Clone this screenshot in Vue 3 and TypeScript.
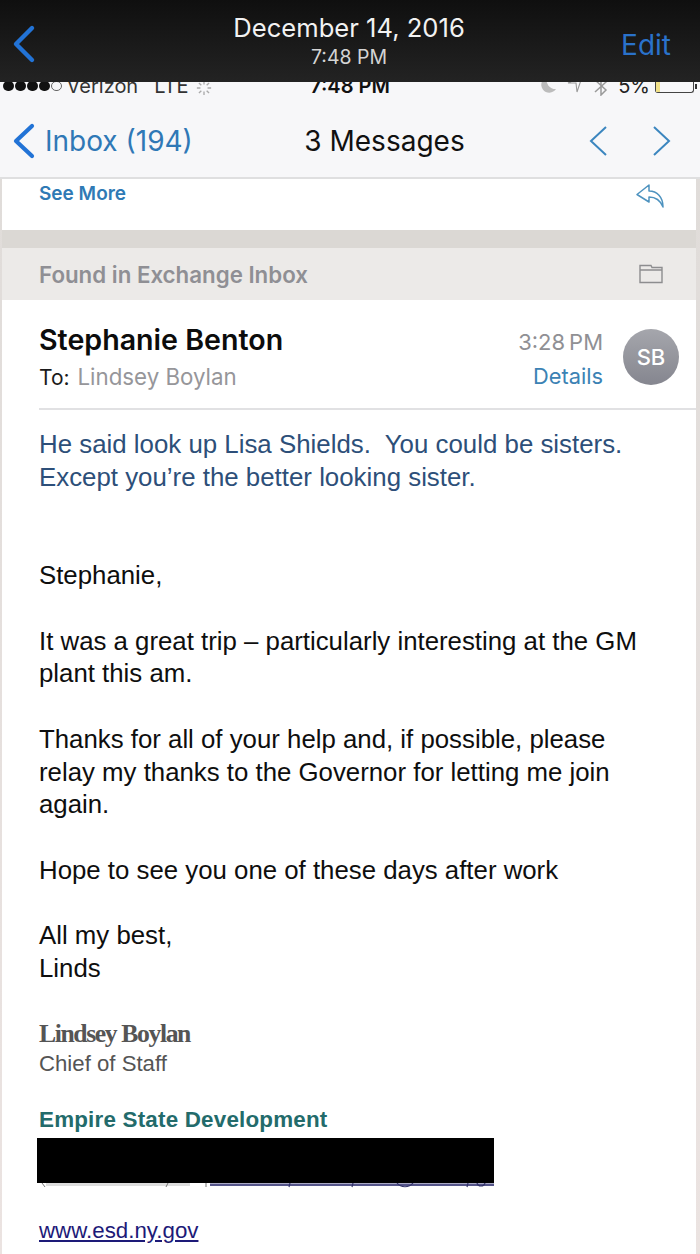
<script setup lang="ts">
const paragraphs: string[][] = [
  ['Stephanie,'],
  ['It was a great trip – particularly interesting at the GM', 'plant this am.'],
  ['Thanks for all of your help and, if possible, please', 'relay my thanks to the Governor for letting me join', 'again.'],
  ['Hope to see you one of these days after work'],
  ['All my best,', 'Linds'],
]
</script>

<template>
  <div class="screen">
    <header class="viewer-bar">
      <svg class="viewer-back" width="26" height="40" viewBox="0 0 26 40" fill="none">
        <path d="M21 4 L5 20 L21 36" stroke="#2273d6" stroke-width="4.4" stroke-linecap="round" stroke-linejoin="round" />
      </svg>
      <div class="viewer-title">
        <div class="viewer-date">December 14, 2016</div>
        <div class="viewer-time">7:48 PM</div>
      </div>
      <span class="viewer-edit">Edit</span>
    </header>

    <div class="status">
      <div class="status-left">
        <span class="dots">
          <i></i><i></i><i></i><i></i><i class="empty"></i>
        </span>
        <span class="carrier">Verizon</span>
        <span class="lte">LTE</span>
        <svg class="spinner" width="16" height="16" viewBox="0 0 18 18" stroke="#aaa" stroke-width="1.500">
          <path d="M9 1V5M9 13V17M1 9H5M13 9H17M3.300 3.300L6 6M12 12L14.700 14.700M14.700 3.300L12 6M6 12L3.300 14.700" />
        </svg>
      </div>
      <div class="status-time">7:48 PM</div>
      <div class="status-right">
        <svg class="moon" width="16" height="16" viewBox="0 0 16 16"><path d="M7 0a8 8 0 1 0 9 12A9 9 0 0 1 7 0z" fill="#bcbcbc" /></svg>
        <svg class="arrow" width="16" height="16" viewBox="0 0 16 16" fill="none" stroke="#9a9a9a" stroke-width="1.100"><path d="M1 6 15 0 10 15 9 6z" /></svg>
        <svg class="bt" width="14" height="20" viewBox="0 0 14 20" fill="none" stroke="#9a9a9a" stroke-width="1.500"><path d="M1 4 12 14 7 19V1L12 6 1 16" /></svg>
        <span class="pct">5%</span>
        <span class="battery"><span class="battery-fill"></span></span>
        <span class="battery-tip"></span>
      </div>
    </div>

    <nav class="nav">
      <div class="nav-back">
        <svg width="24" height="38" viewBox="0 0 24 38" fill="none">
          <path d="M21 4 L5 19 L21 34" stroke="#2273d6" stroke-width="4.200" stroke-linecap="round" stroke-linejoin="round" />
        </svg>
        <span>Inbox (194)</span>
      </div>
      <div class="nav-title">3 Messages</div>
      <div class="nav-arrows">
        <svg width="20" height="32" viewBox="0 0 20 32" fill="none"><path d="M18 2 3 16 18 30" stroke="#3c86bf" stroke-width="2" /></svg>
        <svg width="20" height="32" viewBox="0 0 20 32" fill="none"><path d="M2 2 17 16 2 30" stroke="#3c86bf" stroke-width="2" /></svg>
      </div>
    </nav>

    <main class="thread">
      <section class="prev-card">
        <span class="see-more">See More</span>
        <svg class="reply" width="30" height="24" viewBox="0 0 30 24" fill="none" stroke="#4d92bf" stroke-width="1.500" stroke-linejoin="round">
          <path d="M14 1 2 10.500 14 18V13C20 13 25 15.500 28 23C28 13 22 7 14 7z" />
        </svg>
      </section>

      <section class="found">
        <span>Found in Exchange Inbox</span>
        <svg width="24" height="20" viewBox="0 0 24 20" fill="none" stroke="#8d8d8f" stroke-width="1.400">
          <path d="M1 18.500V1.500H12L13 3.500H23V18.500zM1 6H23" />
        </svg>
      </section>

      <article class="message">
        <div class="msg-head">
          <div class="who">
            <div class="sender">Stephanie Benton</div>
            <div class="to">To: <span>Lindsey Boylan</span></div>
          </div>
          <div class="meta">
            <div class="sent">3:28&#8201;PM</div>
            <div class="details">Details</div>
          </div>
          <div class="avatar">SB</div>
        </div>

        <div class="preface">
          <p>He said look up Lisa Shields.&nbsp; You could be sisters.</p>
          <p>Except you’re the better looking sister.</p>
        </div>

        <div class="body">
          <div v-for="(lines, i) in paragraphs" :key="i" class="para">
            <p v-for="line in lines" :key="line">{{ line }}</p>
          </div>
        </div>

        <div class="signature">
          <div class="sig-name">Lindsey Boylan</div>
          <div class="sig-role">Chief of Staff</div>
          <div class="sig-org">Empire State Development</div>
          <div class="redaction"></div>
          <svg class="remnant" width="457" height="5" viewBox="0 0 457 5" fill="none">
            <rect x="9" y="0" width="144" height="3" fill="#dddddd" />
            <rect x="173" y="0.500" width="284" height="2.500" fill="#55558a" />
            <path d="M5 0 8 4M131 0 129 4M169 0V4" stroke="#777" stroke-width="1" />
            <path d="M253 0 252 4M316 0 315 4M360 0C364 5 372 5 376 0M431 0 430 4M440 0C441 4 447 4 448 0" stroke="#33336a" stroke-width="1.200" />
          </svg>
          <a class="sig-link">www.esd.ny.gov</a>
        </div>
      </article>
    </main>
  </div>
</template>

<style scoped>
.screen {
  width: 700px;
  height: 1254px;
  overflow: hidden;
  display: flex;
  flex-direction: column;
  background: linear-gradient(#dedbd8, #ebe3e1);
  font-family: "Liberation Sans", Arial, sans-serif;
}
p { margin: 0; }

.viewer-bar {
  height: 82px;
  flex: none;
  display: flex;
  align-items: center;
  justify-content: space-between;
  padding: 0 29px 0 11px;
  box-sizing: border-box;
  background: linear-gradient(#0f0f0f, #232323);
  color: #f2f2f2;
  font-family: Inter, sans-serif;
  position: relative;
  z-index: 1;
}
.viewer-back { margin-top: 5px; }
.viewer-title {
  text-align: center;
  margin-left: 40px;
  margin-top: 3px;
}
.viewer-date { font-size: 25.600px; line-height: 30px; }
.viewer-time { font-size: 19.500px; line-height: 29px; color: #d4d4d4; }
.viewer-edit { color: #2a72cb; font-size: 28px; margin-top: 8px; }

.status {
  height: 14px;
  flex: none;
  box-sizing: border-box;
  display: flex;
  align-items: flex-end;
  justify-content: space-between;
  padding: 0 3px 3px 3px;
  background: #f7f7f9;
  color: #222;
  font-family: Inter, sans-serif;
  font-size: 20px;
  line-height: 14px;
}
.status-left, .status-right {
  display: flex;
  align-items: flex-end;
  height: 14px;
  flex: none;
  width: 215px;
}
.status-right { justify-content: flex-end; }
.dots { display: flex; gap: 1.500px; margin: 0 5px 2px 0; }
.dots i {
  width: 10.500px;
  height: 10.500px;
  border-radius: 50%;
  background: #111;
  box-sizing: border-box;
}
.dots i.empty { background: none; border: 1px solid #666; }
.carrier { margin-right: 16px; color: #333; }
.lte { margin-right: 7px; color: #333; }
.spinner { margin-bottom: -3px; }
.status-time { font-weight: 600; color: #111; }
.moon { margin-right: 11px; }
.arrow { margin-right: 11px; }
.bt { margin: 0 10px -3px 0; }
.pct { color: #222; margin-right: 5px; }
.battery {
  width: 39px;
  height: 14px;
  border: 1.500px solid #444;
  border-top: none;
  border-radius: 0 0 3px 3px;
  display: block;
  box-sizing: border-box;
}
.battery-fill { display: block; width: 4px; height: 100%; background: #f1e189; }
.battery-tip { width: 2px; height: 5px; margin: 0 0 4px 1px; background: #333; }

.nav {
  height: 83px;
  flex: none;
  display: flex;
  align-items: center;
  justify-content: space-between;
  box-sizing: border-box;
  padding: 9px 28px 0 11px;
  background: #f7f7f9;
  border-bottom: 2px solid #dfdfe0;
  font-family: Inter, sans-serif;
  font-size: 28px;
}
.nav-back {
  display: flex;
  align-items: center;
  gap: 10px;
  color: #2f78b6;
  width: 190px;
  white-space: nowrap;
}
.nav-title {
  color: #111;
  margin-right: 20px;
}
.nav-arrows {
  display: flex;
  gap: 44px;
}

.thread {
  flex: 1;
  margin: 0 4px 0 2px;
  display: flex;
  flex-direction: column;
  min-height: 0;
  background: #dbd8d4;
}
.prev-card {
  height: 51px;
  flex: none;
  background: #fff;
  padding: 0 32px 0 37px;
  display: flex;
  align-items: flex-start;
  justify-content: space-between;
}
.see-more {
  color: #2f7ab5;
  font-size: 19px;
  font-weight: 600;
  line-height: 30px;
  font-family: Inter, sans-serif;
}
.reply { margin-top: 5px; margin-right: -1px; }

.found {
  margin-top: 18px;
  height: 52px;
  flex: none;
  box-sizing: border-box;
  display: flex;
  align-items: center;
  justify-content: space-between;
  padding: 0 33px 0 37px;
  background: #eceae8;
  color: #8f8f94;
  font-size: 22.300px;
  font-weight: 600;
  font-family: Inter, sans-serif;
}

.message {
  flex: 1;
  background: #fff;
  padding-left: 37px;
}
.msg-head {
  height: 110px;
  box-sizing: border-box;
  border-bottom: 2px solid #e1e1e3;
  display: flex;
  align-items: flex-start;
  font-family: Inter, sans-serif;
}
.who { flex: 1; padding-top: 21px; }
.sender {
  font-size: 28.600px;
  line-height: 38px;
  font-weight: 600;
  color: #0c0c0c;
}
.to {
  font-size: 21px;
  line-height: 35px;
  color: #1b1b1b;
}
.to span { color: #96969a; margin-left: 2px; font-size: 22.300px; }
.meta {
  padding-top: 24px;
  text-align: right;
  font-size: 21.800px;
}
.sent { color: #909094; line-height: 36px; font-size: 22px; }
.details { color: #3b82b4; line-height: 32px; }
.avatar {
  width: 56px;
  height: 56px;
  margin: 29px 17px 0 20px;
  border-radius: 50%;
  background: linear-gradient(#a5a6ac, #85868f);
  color: #fff;
  font-size: 22px;
  font-weight: 500;
  display: flex;
  align-items: center;
  justify-content: center;
}

.preface {
  padding-top: 18px;
  color: #2d4f79;
  font-size: 25.850px;
  line-height: 33px;
}
.body {
  padding-top: 65px;
  color: #0e0e0e;
  font-size: 25.800px;
  line-height: 32.750px;
}
.para + .para { margin-top: 32.750px; }

.signature { padding-top: 34px; }
.sig-name {
  font-family: "Liberation Serif", serif;
  font-weight: 700;
  font-size: 25.700px;
  line-height: 30px;
  letter-spacing: -1.400px;
  color: #555;
}
.sig-role {
  font-size: 22.200px;
  line-height: 30px;
  color: #555;
}
.sig-org {
  margin-top: 26px;
  font-size: 22.400px;
  line-height: 30px;
  font-weight: 700;
  color: #236b6b;
  letter-spacing: .2px;
}
.redaction {
  width: 457px;
  height: 45px;
  margin: 3px 0 0 -2px;
  background: #000;
}
.remnant {
  display: block;
  margin-left: -2px;
}
.sig-link {
  display: block;
  margin-top: 28px;
  font-size: 22.300px;
  line-height: 30px;
  color: #1d1a78;
  text-decoration: underline;
}
</style>
